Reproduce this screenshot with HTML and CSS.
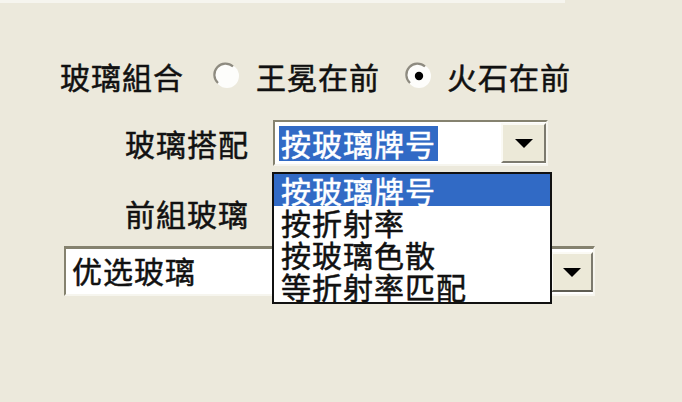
FILE: index.html
```html
<!DOCTYPE html>
<html lang="zh">
<head>
<meta charset="utf-8">
<title>玻璃組合</title>
<link rel="stylesheet" href="styles.css">
</head>
<body>
<div class="topstrip"></div>
<div class="panel">
  <div class="row row-group">
    <span class="label">玻璃組合</span>
    <span class="radio">
      <svg viewBox="0 0 28 28" width="28" height="28"><circle cx="14" cy="14" r="12" fill="#fdfdfb"/><path d="M5 21 A11 11 0 0 1 20 4.5" fill="none" stroke="#8e8b80" stroke-width="2.2"/></svg>
    </span>
    <span class="radio-text">王冕在前</span>
    <span class="radio radio-2">
      <svg viewBox="0 0 28 28" width="28" height="28"><circle cx="14" cy="14" r="12" fill="#fdfdfb"/><path d="M5 21 A11 11 0 0 1 20 4.5" fill="none" stroke="#8e8b80" stroke-width="2.2"/><circle cx="14" cy="14" r="4.2" fill="#000"/></svg>
    </span>
    <span class="radio-text">火石在前</span>
  </div>

  <div class="row row-match">
    <span class="label label-r">玻璃搭配</span>
    <div class="combo combo-match">
      <span class="value"><span class="sel">按玻璃牌号</span></span>
      <span class="drop"><span class="tri"></span></span>
      <ul class="list">
        <li class="item active">按玻璃牌号</li>
        <li class="item">按折射率</li>
        <li class="item">按玻璃色散</li>
        <li class="item">等折射率匹配</li>
      </ul>
    </div>
  </div>

  <div class="row row-front">
    <span class="label label-r">前組玻璃</span>
  </div>

  <div class="row row-pref">
    <div class="combo combo-pref">
      <span class="value">优选玻璃</span>
      <span class="drop drop-pref"><span class="tri"></span></span>
    </div>
  </div>
</div>
</body>
</html>
```

FILE: styles.css
```css
* { box-sizing: border-box; }
html, body {
  margin: 0;
  padding: 0;
  width: 682px;
  height: 402px;
  overflow: hidden;
  background: #ece9dc;
  font-family: "Noto Sans CJK SC", "Noto Sans CJK TC", sans-serif;
  font-size: 30px;
  letter-spacing: 1px;
  color: #111;
  -webkit-text-stroke: 0.5px currentColor;
}
.topstrip {
  width: 565px;
  height: 3px;
  background: #f6f5ef;
}
.panel {
  padding-left: 60px;
  display: flex;
  flex-direction: column;
}
.row {
  display: flex;
  align-items: center;
}
.row-group {
  margin-top: 53px;
  height: 40px;
}
.label { white-space: nowrap; line-height: 1; }
.label-r {
  width: 189px;
  text-align: right;
  flex: none;
}
.radio {
  width: 28px;
  height: 28px;
  margin-left: 29px;
  margin-right: 15px;
  display: flex;
  flex: none;
}
.radio-2 { margin-left: 25px; margin-right: 14px; }
.radio-text { line-height: 1; white-space: nowrap; }

.row-match {
  margin-top: 24px;
  height: 46px;
  gap: 24px;
}
.combo {
  position: relative;
  display: flex;
  align-items: stretch;
  background: #fff;
  border-style: solid;
  border-width: 2px;
  border-color: #85826f #f6f5ee #f6f5ee #85826f;
}
.combo-match {
  width: 275px;
  height: 46px;
}
.value {
  flex: 1;
  display: flex;
  align-items: center;
  padding-left: 4px;
  white-space: nowrap;
}
.sel {
  background: #316ac5;
  color: #fff;
  line-height: 35px;
  height: 35px;
  padding: 0 2px;
}
.drop {
  width: 45px;
  margin: 1px 0;
  flex: none;
  background: #ece9d8;
  border-style: solid;
  border-width: 2px;
  border-color: #fbfaf4 #7c7a6e #7c7a6e #fbfaf4;
  display: flex;
  align-items: center;
  justify-content: center;
}
.tri {
  width: 0;
  height: 0;
  border-left: 9px solid transparent;
  border-right: 9px solid transparent;
  border-top: 9px solid #000;
}
.list {
  position: absolute;
  left: -3px;
  top: 50px;
  width: 280px;
  margin: 0;
  padding: 0;
  list-style: none;
  background: #fff;
  border: 2px solid #111;
  z-index: 2;
}
.item {
  height: 32px;
  line-height: 32px;
  padding-left: 7px;
  white-space: nowrap;
}
.item.active {
  background: #316ac5;
  color: #fff;
}

.row-front {
  margin-top: 30px;
  height: 34px;
}

.row-pref {
  margin-top: 16px;
  margin-left: 4px;
}
.combo-pref {
  width: 531px;
  height: 50px;
  border-width: 3px 2px 2px 2px;
}
.combo-pref .value {
  padding-left: 6px;
  padding-bottom: 4px;
}
.drop-pref {
  width: 42px;
  margin: 3px 0 2px;
  border-bottom-color: #5e5c52;
}
```
